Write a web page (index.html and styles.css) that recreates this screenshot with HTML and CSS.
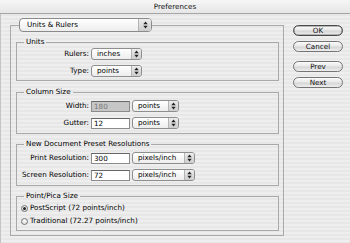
FILE: index.html
```html
<!DOCTYPE html>
<html>
<head>
<meta charset="utf-8">
<link rel="stylesheet" href="styles.css">
</head>
<body>
<div class="titlebar">Preferences</div>
<div class="content">
  <div class="main">
    <fieldset class="outer">
      <legend class="outer-legend">
        <div class="popup big">Units &amp; Rulers<span class="arr"><svg width="5" height="8" viewBox="0 0 5 8"><polygon points="0.3,3.2 2.5,0.6 4.7,3.2"/><polygon points="0.3,4.8 2.5,7.4 4.7,4.8"/></svg></span></div>
      </legend>

      <fieldset class="group g-units">
        <legend>Units</legend>
        <div class="rows">
          <div class="lbl">Rulers:</div>
          <div class="ctl"><div class="popup w51">inches<span class="arr"><svg width="5" height="8" viewBox="0 0 5 8"><polygon points="0.3,3.2 2.5,0.6 4.7,3.2"/><polygon points="0.3,4.8 2.5,7.4 4.7,4.8"/></svg></span></div></div>
          <div class="lbl">Type:</div>
          <div class="ctl"><div class="popup w51">points<span class="arr"><svg width="5" height="8" viewBox="0 0 5 8"><polygon points="0.3,3.2 2.5,0.6 4.7,3.2"/><polygon points="0.3,4.8 2.5,7.4 4.7,4.8"/></svg></span></div></div>
        </div>
      </fieldset>

      <fieldset class="group g-col">
        <legend>Column Size</legend>
        <div class="rows">
          <div class="lbl">Width:</div>
          <div class="ctl"><div class="field disabled">180</div><div class="popup w47">points<span class="arr"><svg width="5" height="8" viewBox="0 0 5 8"><polygon points="0.3,3.2 2.5,0.6 4.7,3.2"/><polygon points="0.3,4.8 2.5,7.4 4.7,4.8"/></svg></span></div></div>
          <div class="lbl">Gutter:</div>
          <div class="ctl"><div class="field">12</div><div class="popup w47">points<span class="arr"><svg width="5" height="8" viewBox="0 0 5 8"><polygon points="0.3,3.2 2.5,0.6 4.7,3.2"/><polygon points="0.3,4.8 2.5,7.4 4.7,4.8"/></svg></span></div></div>
        </div>
      </fieldset>

      <fieldset class="group g-doc">
        <legend>New Document Preset Resolutions</legend>
        <div class="rows">
          <div class="lbl">Print Resolution:</div>
          <div class="ctl"><div class="field">300</div><div class="popup w63">pixels/inch<span class="arr"><svg width="5" height="8" viewBox="0 0 5 8"><polygon points="0.3,3.2 2.5,0.6 4.7,3.2"/><polygon points="0.3,4.8 2.5,7.4 4.7,4.8"/></svg></span></div></div>
          <div class="lbl">Screen Resolution:</div>
          <div class="ctl"><div class="field">72</div><div class="popup w63">pixels/inch<span class="arr"><svg width="5" height="8" viewBox="0 0 5 8"><polygon points="0.3,3.2 2.5,0.6 4.7,3.2"/><polygon points="0.3,4.8 2.5,7.4 4.7,4.8"/></svg></span></div></div>
        </div>
      </fieldset>

      <fieldset class="group g-pica">
        <legend>Point/Pica Size</legend>
        <div class="radio-row"><span class="radio on"><span class="dot"></span></span>PostScript (72 points/inch)</div>
        <div class="radio-row second"><span class="radio"></span>Traditional (72.27 points/inch)</div>
      </fieldset>
    </fieldset>
  </div>
  <div class="buttons">
    <div class="btn default">OK</div>
    <div class="btn b-cancel">Cancel</div>
    <div class="btn b-prev">Prev</div>
    <div class="btn b-next">Next</div>
  </div>
</div>
</body>
</html>
```

FILE: styles.css
```css
html {
  background: repeating-linear-gradient(to bottom, #eeeeee 0, #eeeeee 2px, #e7e7e7 2px, #e7e7e7 4px);
}
body {
  margin: 0;
  width: 350px;
  height: 243px;
  overflow: hidden;
  font-family: "DejaVu Sans", sans-serif;
  font-size: 7.2px;
  line-height: 10px;
  color: #000;
  box-shadow: inset 2px 0 0 -1px #c4c4c4;
}
.titlebar {
  height: 13px;
  line-height: 13px;
  border-bottom: 1px solid #a6a6a6;
  background: linear-gradient(#f6f6f6, #e6e6e6);
  text-align: center;
  font-size: 7.2px;
  color: #111;
}
.content {
  display: flex;
  align-items: flex-start;
}
.main {
  padding-left: 10px;
  padding-top: 4px;
}
fieldset {
  margin: 0;
  min-width: 0;
  border: 1px solid #a9a9a9;
}
.outer {
  width: 274px;
  box-sizing: border-box;
  padding: 5px 4px 4px 5px;
}
.outer-legend {
  padding: 0;
  margin-left: 3px;
}
.group {
  padding: 2px 0 3px 0;
  margin-top: 5px;
}
.group legend {
  padding: 0 2px;
  margin-left: 7px;
  line-height: 10px;
}
.g-units {
  margin-top: 0;
  padding-top: 1px;
  padding-bottom: 3px;
}
.g-col { margin-top: 6px; padding-top: 3px; padding-bottom: 4px; }
.g-doc { padding-top: 3px; padding-bottom: 4px; }
.g-pica { padding-top: 1px; padding-bottom: 3px; }

.rows {
  display: grid;
  grid-template-columns: 72px auto;
  column-gap: 2px;
  row-gap: 5px;
  justify-content: start;
  align-items: center;
}
.lbl {
  text-align: right;
  line-height: 12px;
  white-space: nowrap;
}
.ctl {
  display: flex;
  align-items: center;
  gap: 2px;
  height: 12px;
}
.popup {
  display: flex;
  align-items: center;
  justify-content: space-between;
  height: 12px;
  box-sizing: border-box;
  border: 1px solid #8e8e8e;
  border-radius: 3px;
  background: linear-gradient(#ffffff, #ededed);
  padding-left: 5px;
  line-height: 10px;
  white-space: nowrap;
}
.popup .arr {
  width: 9px;
  align-self: stretch;
  border-left: 1px solid #b4b4b4;
  border-radius: 0 2px 2px 0;
  background: linear-gradient(#ececec, #cdcdcd);
  display: flex;
  align-items: center;
  justify-content: center;
}
.popup svg { fill: #222; display: block; }
.w51 { width: 51px; }
.w47 { width: 47px; }
.w63 { width: 63px; }
.popup.big {
  width: 133px;
  height: 14px;
  padding-left: 7px;
  line-height: 12px;
  border-radius: 4px;
  border-color: #8a8a8a;
}
.popup.big .arr { width: 12px; }

.field {
  width: 39px;
  height: 11px;
  box-sizing: border-box;
  border: 1px solid #8c8c8c;
  border-top-color: #666;
  background: #fff;
  padding-left: 2px;
  line-height: 9px;
}
.field.disabled {
  background: #c6c6c6;
  color: #777;
}
.radio-row {
  display: flex;
  align-items: center;
  height: 12px;
  padding-left: 4px;
  gap: 2px;
}
.radio-row.second { margin-top: 1px; }
.radio {
  width: 7px;
  height: 7px;
  box-sizing: border-box;
  border: 1px solid #777;
  border-radius: 50%;
  background: radial-gradient(circle at 50% 35%, #ffffff, #cfcfcf);
  display: flex;
  align-items: center;
  justify-content: center;
}
.radio .dot {
  width: 3px;
  height: 3px;
  border-radius: 50%;
  background: #222;
}

.buttons {
  margin-left: 9px;
  padding-top: 11px;
  width: 50px;
  display: flex;
  flex-direction: column;
}
.btn {
  height: 11px;
  box-sizing: border-box;
  border: 1px solid #757575;
  border-radius: 6px;
  background: linear-gradient(#fbfbfb 0%, #e9e9e9 45%, #d6d6d6 55%, #eeeeee 100%);
  text-align: center;
  line-height: 9px;
  color: #111;
}
.btn.default {
  border-color: #4a4a4a;
  box-shadow: inset 0 0 0 0.5px #777;
}
.b-cancel { margin-top: 5px; }
.b-prev { margin-top: 9px; }
.b-next { margin-top: 5px; }
```
